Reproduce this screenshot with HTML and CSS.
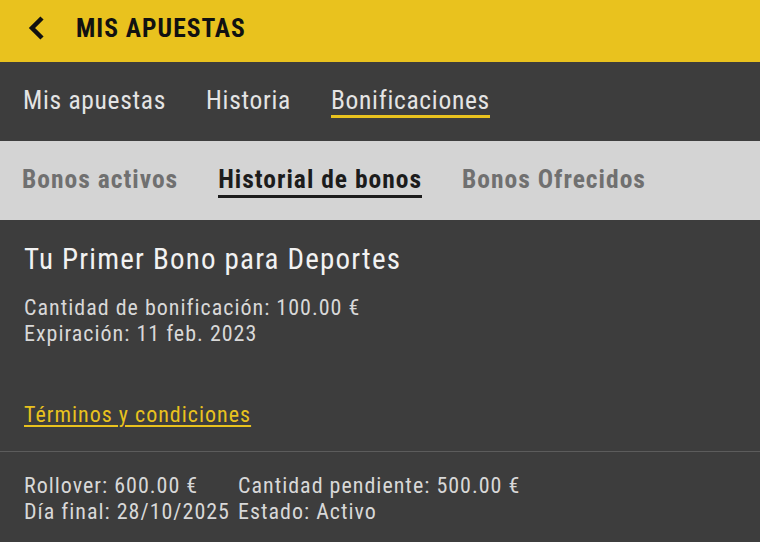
FILE: index.html
```html
<!DOCTYPE html>
<html lang="es">
<head>
    <meta charset="UTF-8">
    <meta name="viewport" content="width=device-width, initial-scale=1.0">
    <title>Mis apuestas</title>
    <link rel="stylesheet" href="styles.css">
</head>
<body>
    <header class="topbar">
        <svg class="back" width="20" height="26" viewBox="0 0 20 26">
            <path d="M15 3 L5 13 L15 23" fill="none" stroke="#111" stroke-width="4.5"/>
        </svg>
        <h1>MIS APUESTAS</h1>
    </header>

    <nav class="tabs">
        <a href="#">Mis apuestas</a>
        <a href="#">Historia</a>
        <a href="#" class="active">Bonificaciones</a>
    </nav>

    <nav class="subtabs">
        <a href="#">Bonos activos</a>
        <a href="#" class="active">Historial de bonos</a>
        <a href="#">Bonos Ofrecidos</a>
    </nav>

    <section class="bonus">
        <h2>Tu Primer Bono para Deportes</h2>
        <p>Cantidad de bonificación: 100.00 €<br>Expiración: 11 feb. 2023</p>
        <a href="#" class="terms">Términos y condiciones</a>
    </section>

    <section class="summary">
        <div class="col">
            <span>Rollover: 600.00 €</span>
            <span>Día final: 28/10/2025</span>
        </div>
        <div class="col">
            <span>Cantidad pendiente: 500.00 €</span>
            <span>Estado: Activo</span>
        </div>
    </section>
</body>
</html>
```

FILE: styles.css
```css
body { margin: 0; background: #3d3d3d; font-family: "Roboto Condensed", Roboto, "Liberation Sans", sans-serif; font-stretch: 85%; color: #e4e4e4; letter-spacing: 1px; }
a { text-decoration: none; color: inherit; }

/* Header */
.topbar { height: 62px; box-sizing: border-box; padding: 0 0 7px 27px; background: #e9c21e; display: flex; align-items: center; }
.topbar .back { margin-right: 29px; }
.topbar h1 { margin: 0; font-size: 25.5px; font-weight: 700; color: #111; letter-spacing: 1px; }

/* Tabs */
.tabs { height: 79px; display: flex; align-items: center; padding-left: 23px; gap: 40px; font-size: 25.5px; letter-spacing: 0.7px; }
.tabs a { padding-top: 0; padding-bottom: 0; border-bottom: 3px solid transparent; }
.tabs a.active { border-color: #e9c21e; }

.subtabs { height: 79px; background: #d4d4d4; display: flex; align-items: center; padding-left: 22px; gap: 40px; font-size: 25.5px; font-weight: 700; }
.subtabs a { color: #707070; padding-top: 0; padding-bottom: 1px; border-bottom: 3px solid transparent; }
.subtabs a.active { color: #1c1c1c; border-color: #1c1c1c; }

/* Bonus card */
.bonus { padding: 22px 24px 24px; border-bottom: 1px solid #5c5c5c; }
.bonus h2 { margin: 0 0 19px; font-size: 29px; font-weight: 400; color: #f2f2f2; letter-spacing: 1.2px; }
.bonus p { margin: 0 0 55px; font-size: 22px; line-height: 26px; color: #d8d8d8; }
.terms { font-size: 22px; color: #e9c21e; text-decoration: underline; text-underline-offset: 3px; }

.summary { display: flex; padding: 21px 24px; font-size: 22px; line-height: 26px; color: #d8d8d8; gap: 8px; }
.summary .col { display: flex; flex-direction: column; }
```
